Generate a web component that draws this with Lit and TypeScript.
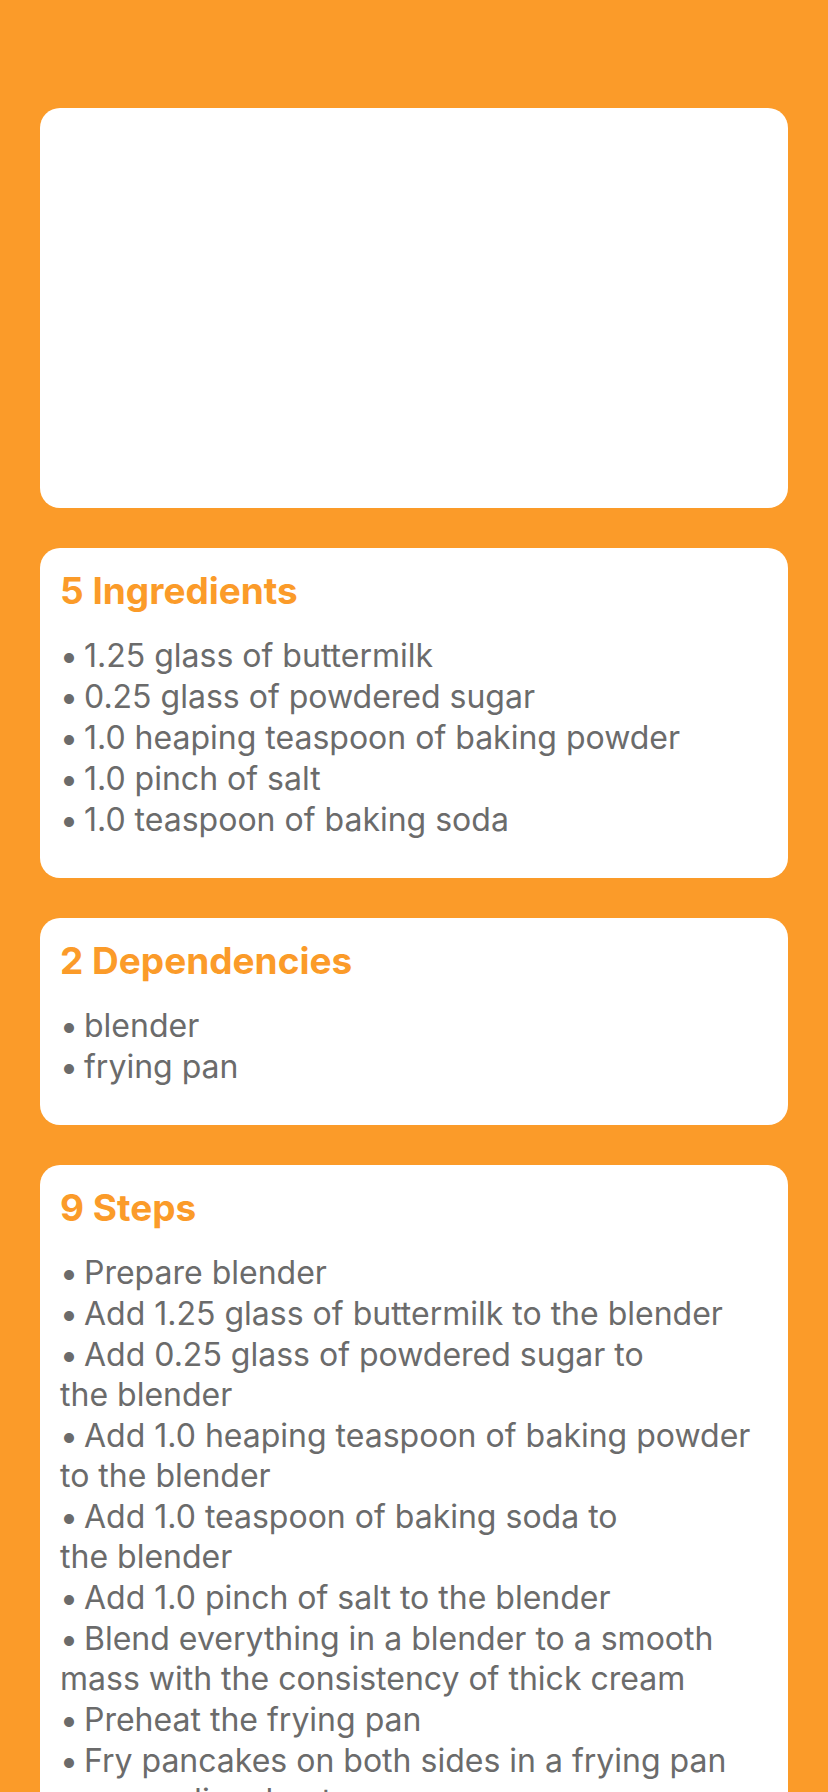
import { LitElement, html, css } from "lit";
import { customElement, property } from "lit/decorators.js";

@customElement("recipe-card")
class RecipeCard extends LitElement {
  @property() heading = "";
  @property({ attribute: false }) items: string[] = [];

  static styles = css`
    :host {
      display: block;
      padding: 20px 20px 38px;
      border-radius: 20px;
      background: #fff;
    }
    .title {
      margin: 0 0 22px;
      color: #fb9b29;
      font-size: 37px;
      line-height: 46px;
      font-weight: 700;
    }
    .list {
      display: flex;
      flex-direction: column;
      gap: 1px;
      margin: 0;
      padding: 0;
      list-style: none;
      color: #6b6b6b;
      font-size: 32px;
      line-height: 40px;
    }
    .bullet {
      display: inline-block;
      width: 24px;
    }
  `;

  render() {
    return html`
      <h2 class="title">${this.heading}</h2>
      <ul class="list">${this.items.map((item) => html`<li><span class="bullet">•</span>${item}</li>`)}</ul>
    `;
  }
}

@customElement("app-root")
class AppRoot extends LitElement {
  static styles = css`
    :host {
      display: block;
      height: 100vh;
      overflow: hidden;
      box-sizing: border-box;
      padding: 108px 40px 0;
      background: #fb9b29;
      font-family: Inter, "Liberation Sans", sans-serif;
    }
    .stack {
      display: flex;
      flex-direction: column;
      gap: 40px;
    }
    .photo {
      height: 400px;
      border-radius: 20px;
      background: #fff;
    }
  `;

  private ingredients = [
    "1.25 glass of buttermilk",
    "0.25 glass of powdered sugar",
    "1.0 heaping teaspoon of baking powder",
    "1.0 pinch of salt",
    "1.0 teaspoon of baking soda",
  ];
  private dependencies = ["blender", "frying pan"];
  private steps = [
    "Prepare blender",
    "Add 1.25 glass of buttermilk to the blender",
    "Add 0.25 glass of powdered sugar to the\u00a0blender",
    "Add 1.0 heaping teaspoon of baking powder to the blender",
    "Add 1.0 teaspoon of baking soda to the\u00a0blender",
    "Add 1.0 pinch of salt to the blender",
    "Blend everything in a blender to a smooth mass with the consistency of thick cream",
    "Preheat the frying pan",
    "Fry pancakes on both sides in a frying pan over medium heat",
  ];

  render() {
    return html`
      <main class="stack">
        <div class="photo"></div>
        <recipe-card heading="5 Ingredients" .items=${this.ingredients}></recipe-card>
        <recipe-card heading="2 Dependencies" .items=${this.dependencies}></recipe-card>
        <recipe-card heading="9 Steps" .items=${this.steps}></recipe-card>
      </main>
    `;
  }
}
